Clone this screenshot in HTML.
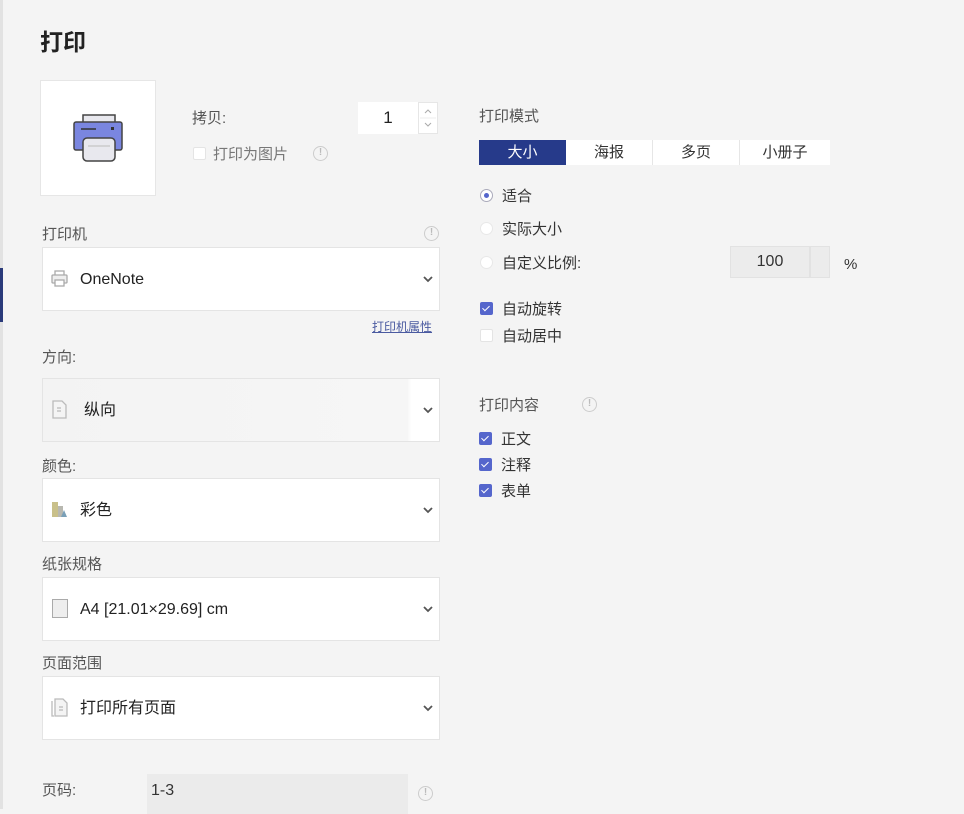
<!DOCTYPE html>
<html><head><meta charset="utf-8"><style>
*{margin:0;padding:0;box-sizing:border-box}
body{width:964px;height:809px;background:#f4f4f4;font-family:"Liberation Sans","Noto Sans CJK SC",sans-serif;color:#333;position:relative;overflow:hidden;font-size:15px}
.a{position:absolute}
.lbl{position:absolute;font-size:15px;color:#555;line-height:20px;margin-top:2px}
.sel{position:absolute;left:42px;width:398px;height:64px;background:#fff;border:1px solid #e4e4e4}
.sel .t{position:absolute;left:37px;top:22px;font-size:16px;color:#222;line-height:20px}
.sel .ch{position:absolute;right:6px;top:26px}
.info{position:absolute;width:15px;height:15px;border:1.5px solid #ccc;border-radius:50%;font-size:10px;color:#bbb;text-align:center;line-height:12px;font-weight:bold}
.cb{position:absolute;width:13px;height:13px;border-radius:2px}
.cb.on{background:#5566cc}
.cb.off{background:#fff;border:1px solid #e4e4e4}
.cb.on::after{content:"";position:absolute;left:4px;top:2px;width:3px;height:6px;border:solid #fff;border-width:0 1.5px 1.5px 0;transform:rotate(45deg)}
.rd{position:absolute;width:13px;height:13px;border-radius:50%;background:#fff;border:1px solid #e8e8e8}
.tab{position:absolute;top:140px;height:25px;width:87px;text-align:center;font-size:15px;line-height:25px;background:#fff;border-right:1px solid #e6e6e6;color:#333}
</style></head><body>
<div class="a" style="left:0;top:0;width:3px;height:809px;background:#e2e2e2"></div>
<div class="a" style="left:0;top:268px;width:3px;height:54px;background:#2a3a7a"></div>

<div class="a" style="left:40px;top:28px;font-size:23px;font-weight:bold;color:#222;line-height:28px">打印</div>

<div class="a" style="left:40px;top:80px;width:116px;height:116px;background:#fff;border:1px solid #e6e6e6">
<svg width="116" height="116" style="position:absolute;left:-1px;top:-1px">
<rect x="43" y="35" width="32" height="9" fill="#e8e8ee" stroke="#444" stroke-width="1.5"/>
<rect x="34" y="42" width="48" height="28" fill="#7a86e0" stroke="#444" stroke-width="1.5" rx="2"/>
<line x1="41" y1="49" x2="56" y2="49" stroke="#333" stroke-width="1.5"/>
<rect x="71" y="47" width="3" height="3" fill="#333"/>
<rect x="43" y="58" width="32" height="23" fill="#e8e8ee" stroke="#444" stroke-width="1.5" rx="4"/>
<line x1="48" y1="66" x2="70" y2="66" stroke="#bbb"/>
</svg></div>

<div class="lbl" style="left:192px;top:107px">拷贝:</div>
<div class="a" style="left:358px;top:102px;width:60px;height:32px;background:#fff;text-align:center;font-size:17px;line-height:32px;color:#222">1</div>
<div class="a" style="left:418px;top:102px;width:20px;height:32px;background:#fff;border:1px solid #e6e6e6">
<svg width="18" height="30"><path d="M6 10 L9 7 L12 10" fill="none" stroke="#aaa"/><line x1="1" y1="15" x2="17" y2="15" stroke="#eee"/><path d="M6 20 L9 23 L12 20" fill="none" stroke="#aaa"/></svg></div>
<div class="cb off" style="left:193px;top:147px"></div>
<div class="lbl" style="left:213px;top:143px;color:#777">打印为图片</div>
<div class="info" style="left:313px;top:146px">!</div>

<div class="lbl" style="left:42px;top:223px">打印机</div>
<div class="info" style="left:424px;top:226px">!</div>
<div class="sel" style="top:247px">
<svg class="a" style="left:8px;top:22px" width="18" height="18"><rect x="4" y="1" width="9" height="5" fill="none" stroke="#aaa" stroke-width="1.3"/><rect x="1" y="5" width="15" height="8" fill="#eee" stroke="#aaa" stroke-width="1.3" rx="1"/><rect x="4" y="10" width="9" height="6" fill="#fff" stroke="#aaa" stroke-width="1.3"/></svg>
<div class="t">OneNote</div>
<svg class="ch" width="10" height="10"><path d="M1 3 L5 7 L9 3" fill="none" stroke="#555" stroke-width="1.8"/></svg>
</div>
<div class="a" style="left:372px;top:319px;font-size:12px;color:#4a5aa0;text-decoration:underline;line-height:16px">打印机属性</div>

<div class="lbl" style="left:42px;top:346px">方向:</div>
<div class="sel" style="top:378px;background:linear-gradient(90deg,#f3f3f3,#f6f6f6 92%,#fff 93%)">
<svg class="a" style="left:8px;top:21px" width="18" height="20"><path d="M2 1 H11 L15 5 V18 H2 Z" fill="#f4f4f4" stroke="#bbb" stroke-width="1.3"/><line x1="6" y1="8" x2="10" y2="8" stroke="#aaa"/><line x1="6" y1="11" x2="10" y2="11" stroke="#aaa"/></svg>
<div class="t" style="left:41px">纵向</div>
<svg class="ch" width="10" height="10"><path d="M1 3 L5 7 L9 3" fill="none" stroke="#555" stroke-width="1.8"/></svg>
</div>

<div class="lbl" style="left:42px;top:455px">颜色:</div>
<div class="sel" style="top:478px">
<svg class="a" style="left:8px;top:22px" width="18" height="18"><rect x="1" y="1" width="6" height="15" fill="#c9c08a"/><rect x="7" y="5" width="5" height="11" fill="#b8b8b0"/><path d="M10 16 L13 9 L16 16 Z" fill="#7aa0b8"/></svg>
<div class="t">彩色</div>
<svg class="ch" width="10" height="10"><path d="M1 3 L5 7 L9 3" fill="none" stroke="#555" stroke-width="1.8"/></svg>
</div>

<div class="lbl" style="left:42px;top:553px">纸张规格</div>
<div class="sel" style="top:577px">
<div class="a" style="left:9px;top:21px;width:16px;height:19px;background:#eee;border:1px solid #aaa"></div>
<div class="t">A4 [21.01×29.69] cm</div>
<svg class="ch" width="10" height="10"><path d="M1 3 L5 7 L9 3" fill="none" stroke="#555" stroke-width="1.8"/></svg>
</div>

<div class="lbl" style="left:42px;top:652px">页面范围</div>
<div class="sel" style="top:676px">
<svg class="a" style="left:8px;top:21px" width="18" height="20"><path d="M1 3 V18 H3" fill="none" stroke="#bbb" stroke-width="1.3"/><path d="M4 1 H12 L16 5 V18 H4 Z" fill="#f4f4f4" stroke="#bbb" stroke-width="1.3"/><line x1="8" y1="9" x2="12" y2="9" stroke="#aaa"/><line x1="8" y1="12" x2="12" y2="12" stroke="#aaa"/></svg>
<div class="t">打印所有页面</div>
<svg class="ch" width="10" height="10"><path d="M1 3 L5 7 L9 3" fill="none" stroke="#555" stroke-width="1.8"/></svg>
</div>

<div class="lbl" style="left:42px;top:779px">页码:</div>
<div class="a" style="left:147px;top:774px;width:261px;height:40px;background:#ebebeb;font-size:16px;color:#333;padding:8px 4px">1-3</div>
<div class="info" style="left:418px;top:786px">!</div>

<div class="lbl" style="left:479px;top:105px">打印模式</div>
<div class="tab" style="left:479px;background:#263a8a;color:#fff;border:none">大小</div>
<div class="tab" style="left:566px">海报</div>
<div class="tab" style="left:653px">多页</div>
<div class="tab" style="left:740px;width:90px;border:none">小册子</div>

<div class="rd" style="left:480px;top:189px;border-color:#aab"><div class="a" style="left:3px;top:3px;width:5px;height:5px;border-radius:50%;background:#5566cc"></div></div>
<div class="lbl" style="left:502px;top:185px;color:#333">适合</div>
<div class="rd" style="left:480px;top:222px"></div>
<div class="lbl" style="left:502px;top:218px;color:#333">实际大小</div>
<div class="rd" style="left:480px;top:256px"></div>
<div class="lbl" style="left:502px;top:252px;color:#333">自定义比例:</div>
<div class="a" style="left:730px;top:246px;width:80px;height:32px;background:#ececec;border:1px solid #e2e2e2;text-align:center;font-size:16px;line-height:30px;color:#333">100</div>
<div class="a" style="left:810px;top:246px;width:20px;height:32px;background:#ececec;border:1px solid #e2e2e2"></div>
<div class="lbl" style="left:844px;top:253px;color:#333">%</div>

<div class="cb on" style="left:480px;top:302px"></div>
<div class="lbl" style="left:502px;top:298px;color:#333">自动旋转</div>
<div class="cb off" style="left:480px;top:329px"></div>
<div class="lbl" style="left:502px;top:325px;color:#333">自动居中</div>

<div class="lbl" style="left:479px;top:394px">打印内容</div>
<div class="info" style="left:582px;top:397px">!</div>
<div class="cb on" style="left:479px;top:432px"></div>
<div class="lbl" style="left:501px;top:428px;color:#333">正文</div>
<div class="cb on" style="left:479px;top:458px"></div>
<div class="lbl" style="left:501px;top:454px;color:#333">注释</div>
<div class="cb on" style="left:479px;top:484px"></div>
<div class="lbl" style="left:501px;top:480px;color:#333">表单</div>
</body></html>
